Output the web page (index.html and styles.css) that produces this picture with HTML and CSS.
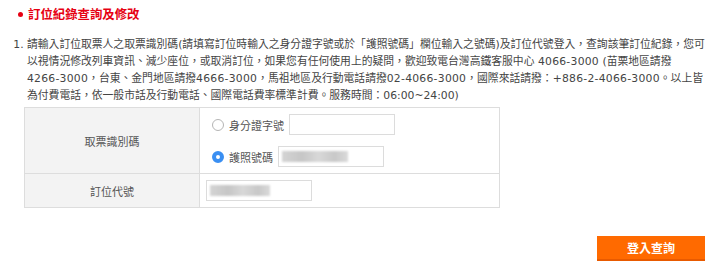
FILE: index.html
```html
<!DOCTYPE html>
<html lang="zh-Hant">
<head>
    <meta charset="UTF-8">
    <meta name="viewport" content="width=device-width, initial-scale=1.0">
    <title>訂位紀錄查詢及修改</title>
    <link rel="stylesheet" href="styles.css">
</head>
<body>
    <h2 class="title">訂位紀錄查詢及修改</h2>

    <ol class="notes">
        <li>請輸入訂位取票人之取票識別碼(請填寫訂位時輸入之身分證字號或於「護照號碼」欄位輸入之號碼)及訂位代號登入，查詢該筆訂位紀錄，您可以視情況修改列車資訊、減少座位，或取消訂位，如果您有任何使用上的疑問，歡迎致電台灣高鐵客服中心 <span class="tel">4066-3000</span> (苗栗地區請撥<span class="tel">4266-3000</span>，台東、金門地區請撥<span class="tel">4666-3000</span>，馬祖地區及行動電話請撥<span class="tel">02-4066-3000</span>，國際來話請撥：<span class="tel">+886-2-4066-3000</span>。以上皆為付費電話，依一般市話及行動電話、國際電話費率標準計費。服務時間：06:00~24:00)</li>
    </ol>

    <table class="query">
        <tr>
            <th>取票識別碼</th>
            <td>
                <label class="opt">
                    <input type="radio" name="idType" value="id">
                    <span>身分證字號</span>
                    <span class="field"></span>
                </label>
                <label class="opt">
                    <input type="radio" name="idType" value="passport" checked>
                    <span>護照號碼</span>
                    <span class="field"><span class="mask"></span></span>
                </label>
            </td>
        </tr>
        <tr>
            <th>訂位代號</th>
            <td>
                <span class="field"><span class="mask short"></span></span>
            </td>
        </tr>
    </table>

    <div class="actions">
        <button class="btn-login">登入查詢</button>
    </div>
</body>
</html>
```

FILE: styles.css
```css
body {
    margin: 0;
    font-family: "DejaVu Sans", "Noto Sans CJK TC", sans-serif;
    color: #444;
    background: #fff;
}
.title {
    margin: 0;
    padding: 6px 0 0 18px;
    font-family: "Noto Sans CJK TC", sans-serif;
    font-size: 12.4px;
    line-height: 16px;
    font-weight: bold;
    color: #e60012;
}
.title::before {
    content: "";
    display: inline-block;
    width: 5px;
    height: 5px;
    margin: 0 5px 2px 0;
    border-radius: 50%;
    background: #e60012;
    vertical-align: middle;
}
.notes {
    margin: 14px 15px 0 0;
    padding-left: 27px;
    font-size: 10.8px;
    line-height: 17px;
}
.tel {
    white-space: nowrap;
    letter-spacing: 0.25px;
}
.query {
    margin: 3px 0 0 24px;
    width: 476px;
    border-collapse: collapse;
    font-family: "Noto Sans CJK TC", sans-serif;
    font-size: 11px;
}
.query th,
.query td {
    border: 1px solid #ddd;
}
.query th {
    width: 172px;
    background: #f3f3f3;
    font-weight: normal;
    color: #555;
}
.query td {
    padding: 6px 0 6px 6px;
    height: 21px;
}
.opt {
    display: flex;
    align-items: center;
    height: 21px;
    color: #555;
}
.opt + .opt {
    margin-top: 11px;
}
.opt input {
    appearance: none;
    width: 12px;
    height: 12px;
    margin: 0 5px 0 6px;
    border: 1px solid #b5b5b5;
    border-radius: 50%;
    background: #fff;
    box-sizing: border-box;
}
.opt input:checked {
    border: 4px solid #3a8ff2;
    background: #fff;
}
.opt .field {
    margin-left: 5px;
}
.field {
    display: flex;
    align-items: center;
    width: 106px;
    height: 21px;
    padding-left: 3px;
    border: 1px solid #dcdcdc;
    box-sizing: border-box;
    background: #fff;
}
.mask {
    display: block;
    width: 66px;
    height: 11px;
    background: linear-gradient(90deg, #d4d4d4 0%, #c6c6c6 30%, #d8d8d8 55%, #c8c8c8 80%, #dadada 100%);
    filter: blur(1px);
}
.mask.short {
    width: 60px;
}
.actions {
    display: flex;
    justify-content: flex-end;
    margin: 28px 15px 0 0;
}
.btn-login {
    width: 108px;
    height: 25px;
    border: none;
    border-bottom: 2px solid #e85a00;
    background: #ff6a00;
    color: #fff;
    font-family: "Noto Sans CJK TC", sans-serif;
    font-size: 12px;
    font-weight: bold;
    cursor: pointer;
}
```
